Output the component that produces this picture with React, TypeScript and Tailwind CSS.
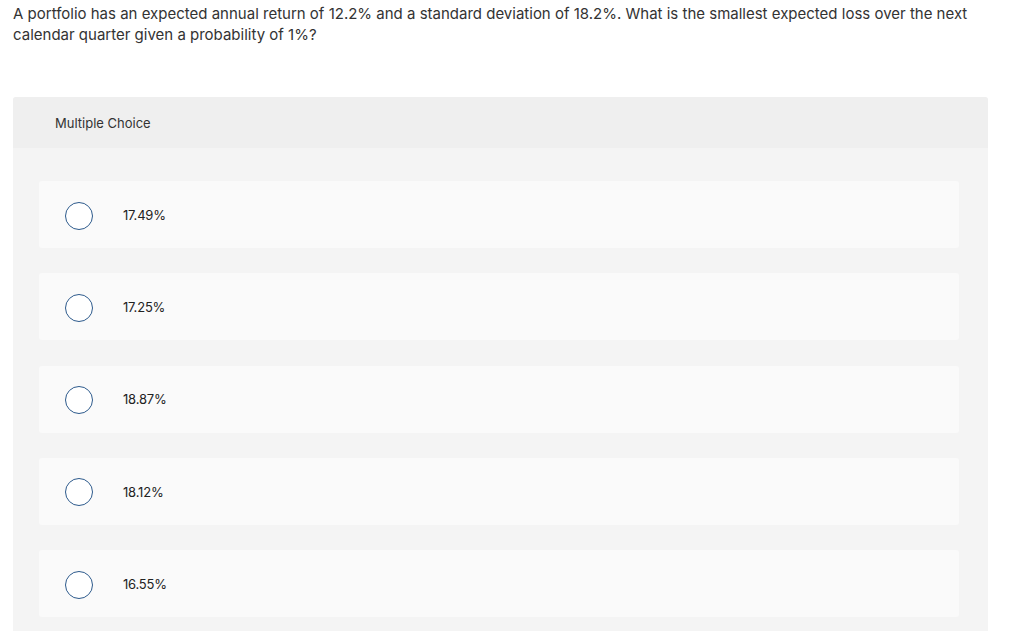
const question =
  "A portfolio has an expected annual return of 12.2% and a standard deviation of 18.2%. What is the smallest expected loss over the next calendar quarter given a probability of 1%?";

const choices = ["17.49%", "17.25%", "18.87%", "18.12%", "16.55%"];

function Choice({ label }: { label: string }) {
  return (
    <div className="flex h-[67px] items-center rounded-[3px] bg-[#fafafa] pl-[26px] pt-[2px]">
      <span className="h-[28px] w-[28px] rounded-full border-[1.5px] border-[#2d5a8c] bg-white" />
      <span className="ml-[30px] text-[13px] tracking-[-0.2px] text-[#222]">{label}</span>
    </div>
  );
}

export default function App() {
  return (
    <div className="min-h-[631px] bg-white font-['Inter','Lato',sans-serif]">
      <p className="max-w-[985px] px-[13px] pt-[3px] text-[15px] leading-[21px] text-[#333]">
        {question}
      </p>
      <div className="ml-[13px] mt-[52px] w-[975px] overflow-hidden rounded-t-[3px] bg-[#f4f4f4] pb-[14px]">
        <div className="flex h-[51px] items-center bg-[#efefef] pl-[42px] pt-[2px] text-[13px] text-[#333]">
          Multiple Choice
        </div>
        <div className="flex flex-col gap-[25.25px] px-[26px] pr-[29px] pt-[33px]">
          {choices.map((c) => (
            <Choice key={c} label={c} />
          ))}
        </div>
      </div>
    </div>
  );
}
